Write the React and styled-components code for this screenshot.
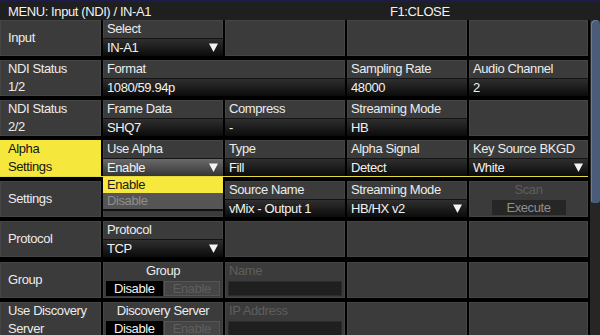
import React from "react";
import styled, { createGlobalStyle } from "styled-components";

const Global = createGlobalStyle`
  html, body {
    margin: 0;
    padding: 0;
    background: #000;
  }
  body {
    font-family: "Liberation Sans", Arial, sans-serif;
    font-size: 13px;
    letter-spacing: -0.4px;
    color: #ececec;
    overflow: hidden;
  }
`;

const Screen = styled.div`
  width: 600px;
  height: 335px;
  overflow: hidden;
  display: flex;
  flex-direction: column;
  background: #000;
`;

const TitleBar = styled.div`
  height: 20px;
  box-sizing: border-box;
  border-top: 2px solid #1c1c4c;
  background: #1f1f1f;
  display: flex;
  align-items: center;
  padding-left: 8px;
  color: #f2f2f2;
  flex-shrink: 0;
`;

const TitleText = styled.span`
  flex: 0 0 382px;
`;

const Body = styled.div`
  display: flex;
  gap: 2px;
  flex: 1;
  min-height: 0;
`;

const Table = styled.div`
  width: 588px;
  display: flex;
  flex-direction: column;
  gap: 4px;
`;

const Row = styled.div`
  display: grid;
  grid-template-columns: 101px 120px 120px 120px 119px;
  column-gap: 2px;
  height: ${p => (p.$active ? "37px" : "36px")};
  flex-shrink: 0;
  box-sizing: border-box;
  padding-bottom: ${p => (p.$active ? "1px" : "0")};
  background: ${p =>
    p.$active ? "linear-gradient(to top, #e6d93a 1px, transparent 1px)" : "none"};
  position: relative;
  z-index: ${p => (p.$active ? 2 : 1)};
  margin-top: ${p => (p.$shift ? "1px" : "0")};
`;

const Cell = styled.div`
  position: relative;
  display: flex;
  flex-direction: column;
  background: #3b3b3b;
  box-shadow: inset 0 0 0 1px #454545;
  min-width: 0;
`;

const LabelCell = styled(Cell)`
  justify-content: center;
  padding-left: 8px;
  line-height: 18px;
  background: ${p => (p.$active ? "#f5e73c" : "#3b3b3b")};
  box-shadow: ${p => (p.$active ? "none" : "inset 0 0 0 1px #454545")};
  color: ${p => (p.$active ? "#151515" : "#ececec")};
`;

const Head = styled.div`
  height: 18px;
  line-height: 18px;
  padding: 0 4px;
  white-space: nowrap;
  color: ${p => (p.$dim ? "#5e5e5e" : "#ececec")};
  text-align: ${p => (p.$center ? "center" : "left")};
`;

const Value = styled.div`
  flex: 1;
  display: flex;
  align-items: center;
  justify-content: space-between;
  padding: 0 5px 0 4px;
  border-top: 1px solid #141414;
  background: ${p =>
    p.$open
      ? "linear-gradient(#6a6a6a, #353535)"
      : "linear-gradient(#2f2f2f, #0b0b0b)"};
  color: #f2f2f2;
  white-space: nowrap;
`;

const Plain = styled.div`
  flex: 1;
  display: flex;
  align-items: center;
  justify-content: center;
  padding: 1px 3px 2px;
  gap: 1px;
`;

const ToggleBtn = styled.div`
  flex: 1;
  align-self: stretch;
  display: flex;
  align-items: center;
  justify-content: center;
  background: ${p => (p.$on ? "#000" : "#454545")};
  color: ${p => (p.$on ? "#f2f2f2" : "#5e5e5e")};
  box-shadow: ${p => (p.$on ? "none" : "inset 0 0 0 1px #555")};
`;

const InputBox = styled.div`
  flex: 1;
  align-self: stretch;
  background: #1f1f1f;
  box-shadow: inset 0 0 0 1px #2b2b2b;
`;

const ExecuteBtn = styled.div`
  width: 74px;
  align-self: stretch;
  display: flex;
  align-items: center;
  justify-content: center;
  background: #262626;
  color: #8e8e8e;
`;

const Menu = styled.div`
  position: absolute;
  top: 100%;
  left: 0;
  right: 0;
  margin-top: 1px;
  display: flex;
  flex-direction: column;
  border-bottom: 2px solid #111;
  z-index: 5;
`;

const MenuItem = styled.div`
  height: 16px;
  line-height: 16px;
  padding-left: 4px;
  background: ${p => (p.$sel ? "#f6e83c" : "#555555")};
  color: ${p => (p.$sel ? "#1a1a1a" : "#8d8d8d")};
`;

const Scrollbar = styled.div`
  flex: 1;
  background: #262626;
  display: flex;
  flex-direction: column;
`;

const Thumb = styled.div`
  height: 183px;
  margin-left: 1px;
  border-radius: 6px 6px 4px 4px;
  background: #4b5c78;
  box-shadow: inset 1px 1px 0 #6a7c98;
`;

const Arrow = () => (
  <svg width="9" height="9" viewBox="0 0 9 9">
    <polygon points="0,0.5 9,0.5 4.5,9" fill="#f4f4f4" />
  </svg>
);

const Field = ({ head, value, select, open, span, children }) => (
  <Cell style={span ? { gridColumn: `span ${span}` } : undefined}>
    <Head>{head}</Head>
    <Value $open={open}>
      <span>{value}</span>
      {select && <Arrow />}
    </Value>
    {children}
  </Cell>
);

const Empty = () => <Cell />;

const Label = ({ lines, active }) => (
  <LabelCell $active={active}>
    {lines.map(l => (
      <div key={l}>{l}</div>
    ))}
  </LabelCell>
);

const Toggle = ({ head }) => (
  <Cell>
    <Head $center>{head}</Head>
    <Plain>
      <ToggleBtn $on>Disable</ToggleBtn>
      <ToggleBtn>Enable</ToggleBtn>
    </Plain>
  </Cell>
);

const TextEntry = ({ head }) => (
  <Cell>
    <Head $dim>{head}</Head>
    <Plain>
      <InputBox />
    </Plain>
  </Cell>
);

const App = () => {
  return (
    <Screen>
      <Global />
      <TitleBar>
        <TitleText>MENU: Input (NDI) / IN-A1</TitleText>
        <span>F1:CLOSE</span>
      </TitleBar>
      <Body>
        <Table>
          <Row>
            <Label lines={["Input"]} />
            <Field head="Select" value="IN-A1" select />
            <Empty />
            <Empty />
            <Empty />
          </Row>
          <Row>
            <Label lines={["NDI Status", "1/2"]} />
            <Field head="Format" value="1080/59.94p" span={2} />
            <Field head="Sampling Rate" value="48000" />
            <Field head="Audio Channel" value="2" />
          </Row>
          <Row>
            <Label lines={["NDI Status", "2/2"]} />
            <Field head="Frame Data" value="SHQ7" />
            <Field head="Compress" value="-" />
            <Field head="Streaming Mode" value="HB" />
            <Empty />
          </Row>
          <Row $active>
            <Label lines={["Alpha", "Settings"]} active />
            <Field head="Use Alpha" value="Enable" select open>
              <Menu>
                <MenuItem $sel>Enable</MenuItem>
                <MenuItem>Disable</MenuItem>
              </Menu>
            </Field>
            <Field head="Type" value="Fill" />
            <Field head="Alpha Signal" value="Detect" />
            <Field head="Key Source BKGD" value="White" select />
          </Row>
          <Row>
            <Label lines={["Settings"]} />
            <Empty />
            <Field head="Source Name" value="vMix - Output 1" />
            <Field head="Streaming Mode" value="HB/HX v2" select />
            <Cell>
              <Head $dim $center>Scan</Head>
              <Plain>
                <ExecuteBtn>Execute</ExecuteBtn>
              </Plain>
            </Cell>
          </Row>
          <Row>
            <Label lines={["Protocol"]} />
            <Field head="Protocol" value="TCP" select />
            <Empty />
            <Empty />
            <Empty />
          </Row>
          <Row $shift>
            <Label lines={["Group"]} />
            <Toggle head="Group" />
            <TextEntry head="Name" />
            <Empty />
            <Empty />
          </Row>
          <Row>
            <Label lines={["Use Discovery", "Server"]} />
            <Toggle head="Discovery Server" />
            <TextEntry head="IP Address" />
            <Empty />
            <Empty />
          </Row>
        </Table>
        <Scrollbar>
          <Thumb />
        </Scrollbar>
      </Body>
    </Screen>
  );
};

export default App;
